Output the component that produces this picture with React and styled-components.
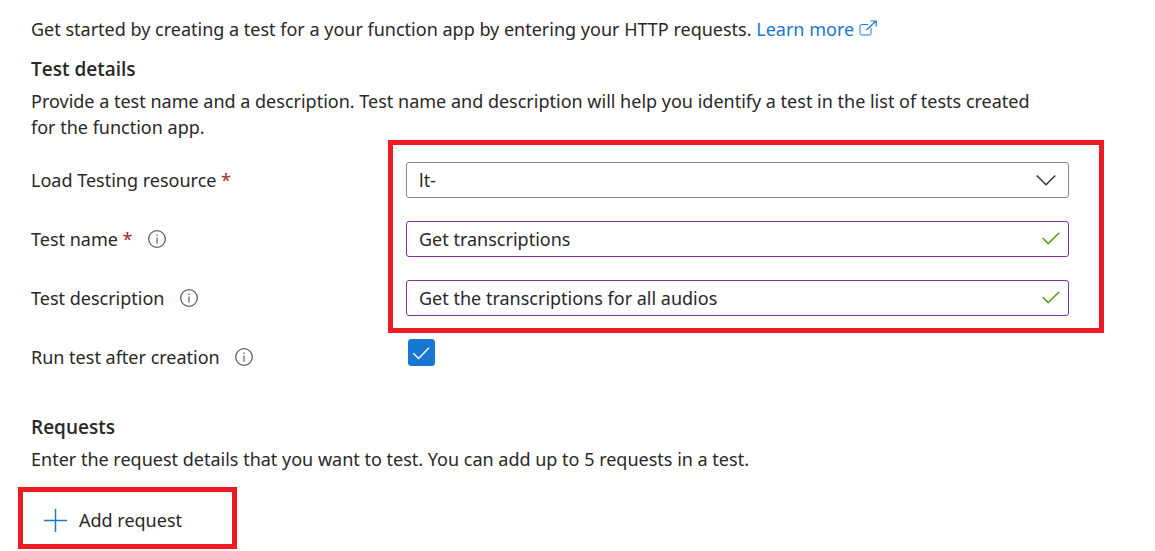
import React from "react";
import styled, { createGlobalStyle } from "styled-components";

const GlobalStyle = createGlobalStyle`
  *, *::before, *::after { box-sizing: border-box; }
  body {
    margin: 0;
    background: #fff;
    color: #292827;
    font-family: "Noto Sans", "Open Sans", sans-serif;
    font-size: 18px;
    line-height: 26px;
  }
  input, select, button { font: inherit; color: inherit; }
`;

const Page = styled.main`
  padding: 16px 86px 2px 31px;
`;

const Paragraph = styled.p`
  margin: 0;
  padding-right: 16px;
`;

const Heading = styled.h2`
  margin: ${(p) => p.$gap}px 0 6px;
  font-family: "Open Sans", "Noto Sans", sans-serif;
  font-size: 19px;
  font-weight: 600;
`;

const Link = styled.a`
  color: #1976d2;
  text-decoration: none;
  svg { margin-left: 5px; }
`;

const Form = styled.form`
  position: relative;
  display: grid;
  gap: 23px;
  margin-top: 22px;
`;

const Row = styled.div`
  display: grid;
  grid-template-columns: 375px minmax(0, 1fr);
  height: 36px;
`;

const LabelCell = styled.div`
  display: flex;
  align-items: center;
  gap: 15px;
`;

const Required = styled.span`
  color: #a4262c;
`;

const InfoButton = styled.button`
  display: flex;
  padding: 0;
  border: 0;
  background: none;
`;

const Field = styled.div`
  display: flex;
  align-items: center;
  padding-right: ${(p) => p.$inset}px;
  border: 1px solid ${(p) => (p.$edited ? "#8a2da5" : "#8a8886")};
  border-radius: 3px;
`;

const TextInput = styled.input`
  flex: 1;
  min-width: 0;
  height: 32px;
  padding: 0 12px;
  border: 0;
  outline: 0;
  background: none;
`;

const Select = styled.select`
  flex: 1;
  min-width: 0;
  height: 34px;
  padding: 0 12px;
  border: 0;
  outline: 0;
  background: none;
  appearance: none;
`;

const CheckCell = styled.div`
  display: grid;
  width: 27px;
  height: 27px;
  margin-left: 2px;
  svg, input { grid-area: 1 / 1; }
  svg { pointer-events: none; z-index: 1; }
`;

const Checkbox = styled.input`
  width: 27px;
  height: 27px;
  margin: 0;
  appearance: none;
  border: 1px solid #1976d2;
  border-radius: 3px;
  &:checked { background: #1976d2; }
`;

const Highlight = styled.div`
  position: absolute;
  top: -22px;
  right: -35px;
  bottom: 42px;
  left: 357px;
  border: 5px solid #ed1c24;
  pointer-events: none;
`;

const AddButton = styled.button`
  display: flex;
  align-items: center;
  gap: 12px;
  width: 219px;
  height: 62px;
  margin: 15px 0 0 -13px;
  padding: 4px 0 0 21px;
  border: 5px solid #ed1c24;
  background: none;
`;

function ExternalIcon() {
  return (
    <svg width="18" height="16" viewBox="0 0 18 16" fill="none" stroke="#1976d2" aria-hidden="true">
      <path d="M9 4.5H2.5q-1.5 0-1.5 1.5v7.5q0 1.500 1.500 1.500h8q1.500 0 1.500-1.500V8" />
      <path d="M11.500 1H17.200V6.500M17 1L7.500 10" strokeWidth="1.200" />
    </svg>
  );
}

function InfoIcon() {
  return (
    <svg width="18" height="18" viewBox="0 0 18 18" fill="none" aria-hidden="true">
      <circle cx="9" cy="9" r="8.300" stroke="#605e5c" strokeWidth="1.300" />
      <path d="M9 7.500V13.500M9 4.500V6" stroke="#605e5c" strokeWidth="1.200" />
    </svg>
  );
}

function ChevronIcon() {
  return (
    <svg width="20" height="12" viewBox="0 0 20 12" fill="none" stroke="#323130" strokeWidth="1.400" aria-hidden="true">
      <path d="M.7 1.500L10 10.800 19.300 1.500" />
    </svg>
  );
}

function ValidIcon() {
  return (
    <svg width="18" height="14" viewBox="0 0 18 14" fill="none" stroke="#57a01c" strokeWidth="1.500" aria-hidden="true">
      <path d="M.6 6L6.200 11.600 17.300.7" />
    </svg>
  );
}

function TickIcon() {
  return (
    <svg width="27" height="27" viewBox="0 0 27 27" fill="none" stroke="#fff" strokeWidth="1.400" aria-hidden="true">
      <path d="M5.300 14.200L10.600 19.500 21 8.700" />
    </svg>
  );
}

function PlusIcon() {
  return (
    <svg width="23" height="23" viewBox="0 0 23 23" stroke="#1976d2" strokeWidth="1.500" aria-hidden="true">
      <path d="M11.500 0V23M0 11.500H23" />
    </svg>
  );
}

function Label({ htmlFor, text, required, info }) {
  return (
    <LabelCell>
      <label htmlFor={htmlFor}>
        {text}
        {required && <Required> *</Required>}
      </label>
      {info && (
        <InfoButton type="button" aria-label={`About ${text}`}>
          <InfoIcon />
        </InfoButton>
      )}
    </LabelCell>
  );
}

function TextRow({ id, label, value, required }) {
  return (
    <Row>
      <Label htmlFor={id} text={label} required={required} info />
      <Field $edited $inset={8}>
        <TextInput id={id} type="text" defaultValue={value} />
        <ValidIcon />
      </Field>
    </Row>
  );
}

export default function App() {
  return (
    <Page>
      <GlobalStyle />
      <Paragraph>
        Get started by creating a test for a your function app by entering your HTTP requests.{" "}
        <Link href="#learn-more">
          Learn more
          <ExternalIcon />
        </Link>
      </Paragraph>

      <Heading $gap={14}>Test details</Heading>
      <Paragraph>
        Provide a test name and a description. Test name and description will help you identify a
        test in the list of tests created for the function app.
      </Paragraph>

      <Form>
        <Row>
          <Label htmlFor="resource" text="Load Testing resource" required />
          <Field $inset={12}>
            <Select id="resource" defaultValue="lt-">
              <option>lt-</option>
            </Select>
            <ChevronIcon />
          </Field>
        </Row>
        <TextRow id="name" label="Test name" value="Get transcriptions" required />
        <TextRow
          id="description"
          label="Test description"
          value="Get the transcriptions for all audios"
        />
        <Row>
          <Label htmlFor="run" text="Run test after creation" info />
          <CheckCell>
            <Checkbox id="run" type="checkbox" defaultChecked />
            <TickIcon />
          </CheckCell>
        </Row>
        <Highlight />
      </Form>

      <Heading $gap={39}>Requests</Heading>
      <Paragraph>
        Enter the request details that you want to test. You can add up to 5 requests in a test.
      </Paragraph>
      <AddButton type="button">
        <PlusIcon />
        Add request
      </AddButton>
    </Page>
  );
}
